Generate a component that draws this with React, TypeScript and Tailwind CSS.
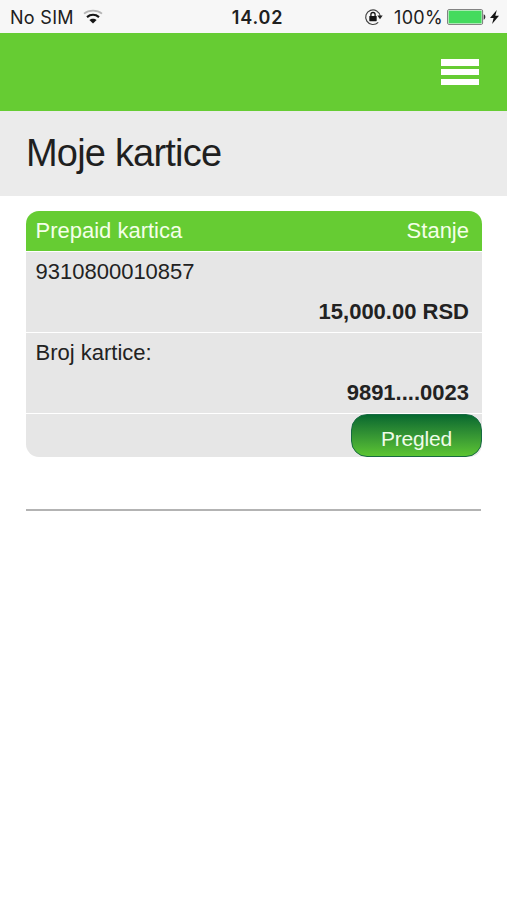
import type { ReactNode } from "react";

interface CardRow { label: string; value: string; }

const rows: CardRow[] = [
  { label: "9310800010857", value: "15,000.00 RSD" },
  { label: "Broj kartice:", value: "9891....0023" },
];

function WifiIcon() {
  return (
    <svg width="20" height="16" viewBox="0 0 20 16" fill="none" className="-mt-0.5 ml-[9px]">
      <path d="M1 4.600C6 .7 14 .7 19 4.600" stroke="#b4b4b4" strokeWidth="1.800" />
      <path d="M4 8.100c3.600-2.900 8.400-2.900 12 0" stroke="#151515" strokeWidth="2.200" />
      <path d="M10 14.500l-3.600-3.400c2-1.800 5.200-1.800 7.200 0z" fill="#151515" />
    </svg>
  );
}

function RotationLockIcon() {
  return (
    <svg width="20" height="18" viewBox="0 0 20 18" fill="none" className="-mt-0.5">
      <path d="M14.200 14.300A7.300 7.300 0 1 1 16.200 8.200" stroke="#444" strokeWidth="1.200" />
      <path d="M13.300 7.500h5.400L16 11.200z" fill="#222" />
      <rect x="5.300" y="8" width="7.400" height="5.200" rx=".6" fill="#151515" />
      <path d="M6.900 8.200V6.600a2.100 2.100 0 0 1 4.200 0v1.600" stroke="#151515" strokeWidth="1.300" />
    </svg>
  );
}

function BatteryIcon() {
  return (
    <svg width="39" height="16" viewBox="0 0 39 16" className="-mt-0.5">
      <rect x=".6" y=".6" width="35" height="14.800" rx="1.300" fill="#fff" stroke="#777" strokeWidth="1" />
      <rect x="1.600" y="1.600" width="33" height="12.800" fill="#44db5e" />
      <path d="M36.700 5.300c2.200.7 2.200 4.700 0 5.400z" fill="#333" />
    </svg>
  );
}

function BoltIcon() {
  return (
    <svg width="9" height="14" viewBox="0 0 9 14">
      <path d="M6.800 0L0 7.900h3.600L2.100 14 9 5.800H5.300z" fill="#151515" />
    </svg>
  );
}

function StatusBar() {
  return (
    <div
      className="grid h-[33px] grid-cols-[1fr_auto_1fr] items-center bg-[#f7f7f7] pt-0.5 pr-2 pl-2.5 text-[18px] leading-none text-[#202020]"
      style={{ fontFamily: "Inter, sans-serif" }}
    >
      <div className="flex items-center">
        <span className="tracking-[0.3px]">No SIM</span>
        <WifiIcon />
      </div>
      <span className="pl-1.5 font-semibold tracking-[0.8px]">14.02</span>
      <div className="flex items-center justify-end">
        <RotationLockIcon />
        <span className="mr-1 ml-2.5 tracking-[0.3px]">100%</span>
        <BatteryIcon />
        <span className="-mt-0.5 ml-1"><BoltIcon /></span>
      </div>
    </div>
  );
}

function TopBar() {
  return (
    <header className="flex h-[78px] justify-end bg-[#66cc33] pt-[26px] pr-7">
      <button aria-label="Meni" className="flex h-[26px] w-[38px] flex-col justify-between">
        <span className="h-[6.500px] w-full bg-white" />
        <span className="h-[6.500px] w-full bg-white" />
        <span className="h-[6.500px] w-full bg-white" />
      </button>
    </header>
  );
}

function Card({ children }: { children: ReactNode }) {
  return (
    <section className="flex flex-col gap-px overflow-hidden rounded-[13px] text-[22px] leading-[40px] text-[#222]">
      {children}
    </section>
  );
}

export default function App() {
  return (
    <div className="min-h-screen bg-white" style={{ fontFamily: '"Liberation Sans", Arial, sans-serif' }}>
      <StatusBar />
      <TopBar />
      <div className="h-[85px] bg-[#ebebeb] pl-[26px]">
        <h1 className="text-[38px] leading-[84px] tracking-[-0.8px] text-[#1f1f1f]">Moje kartice</h1>
      </div>

      <main className="pt-[15px] pr-[25px] pl-[26px]">
        <Card>
          <div className="flex h-10 justify-between bg-[#66cc33] pr-[13px] pl-[9.500px] text-[#f4ffe9]">
            <span>Prepaid kartica</span>
            <span>Stanje</span>
          </div>
          {rows.map((row) => (
            <div key={row.label} className="flex h-20 flex-col bg-[#e6e6e6] pr-[13px] pl-[9.500px]">
              <span>{row.label}</span>
              <span className="text-right font-bold">{row.value}</span>
            </div>
          ))}
          <div className="flex h-[43px] items-end justify-end bg-[#e6e6e6]">
            <button className="h-[43px] w-[131px] rounded-[16px] border border-[#176b42] bg-linear-to-b from-[#04692f] to-[#5cc532] pt-1.5 text-[21px] leading-none tracking-[-0.2px] text-[#effce9]">
              Pregled
            </button>
          </div>
        </Card>
        <hr className="mt-[52px] mr-px border-0 border-t-2 border-[#b3b3b3]" />
      </main>
    </div>
  );
}
